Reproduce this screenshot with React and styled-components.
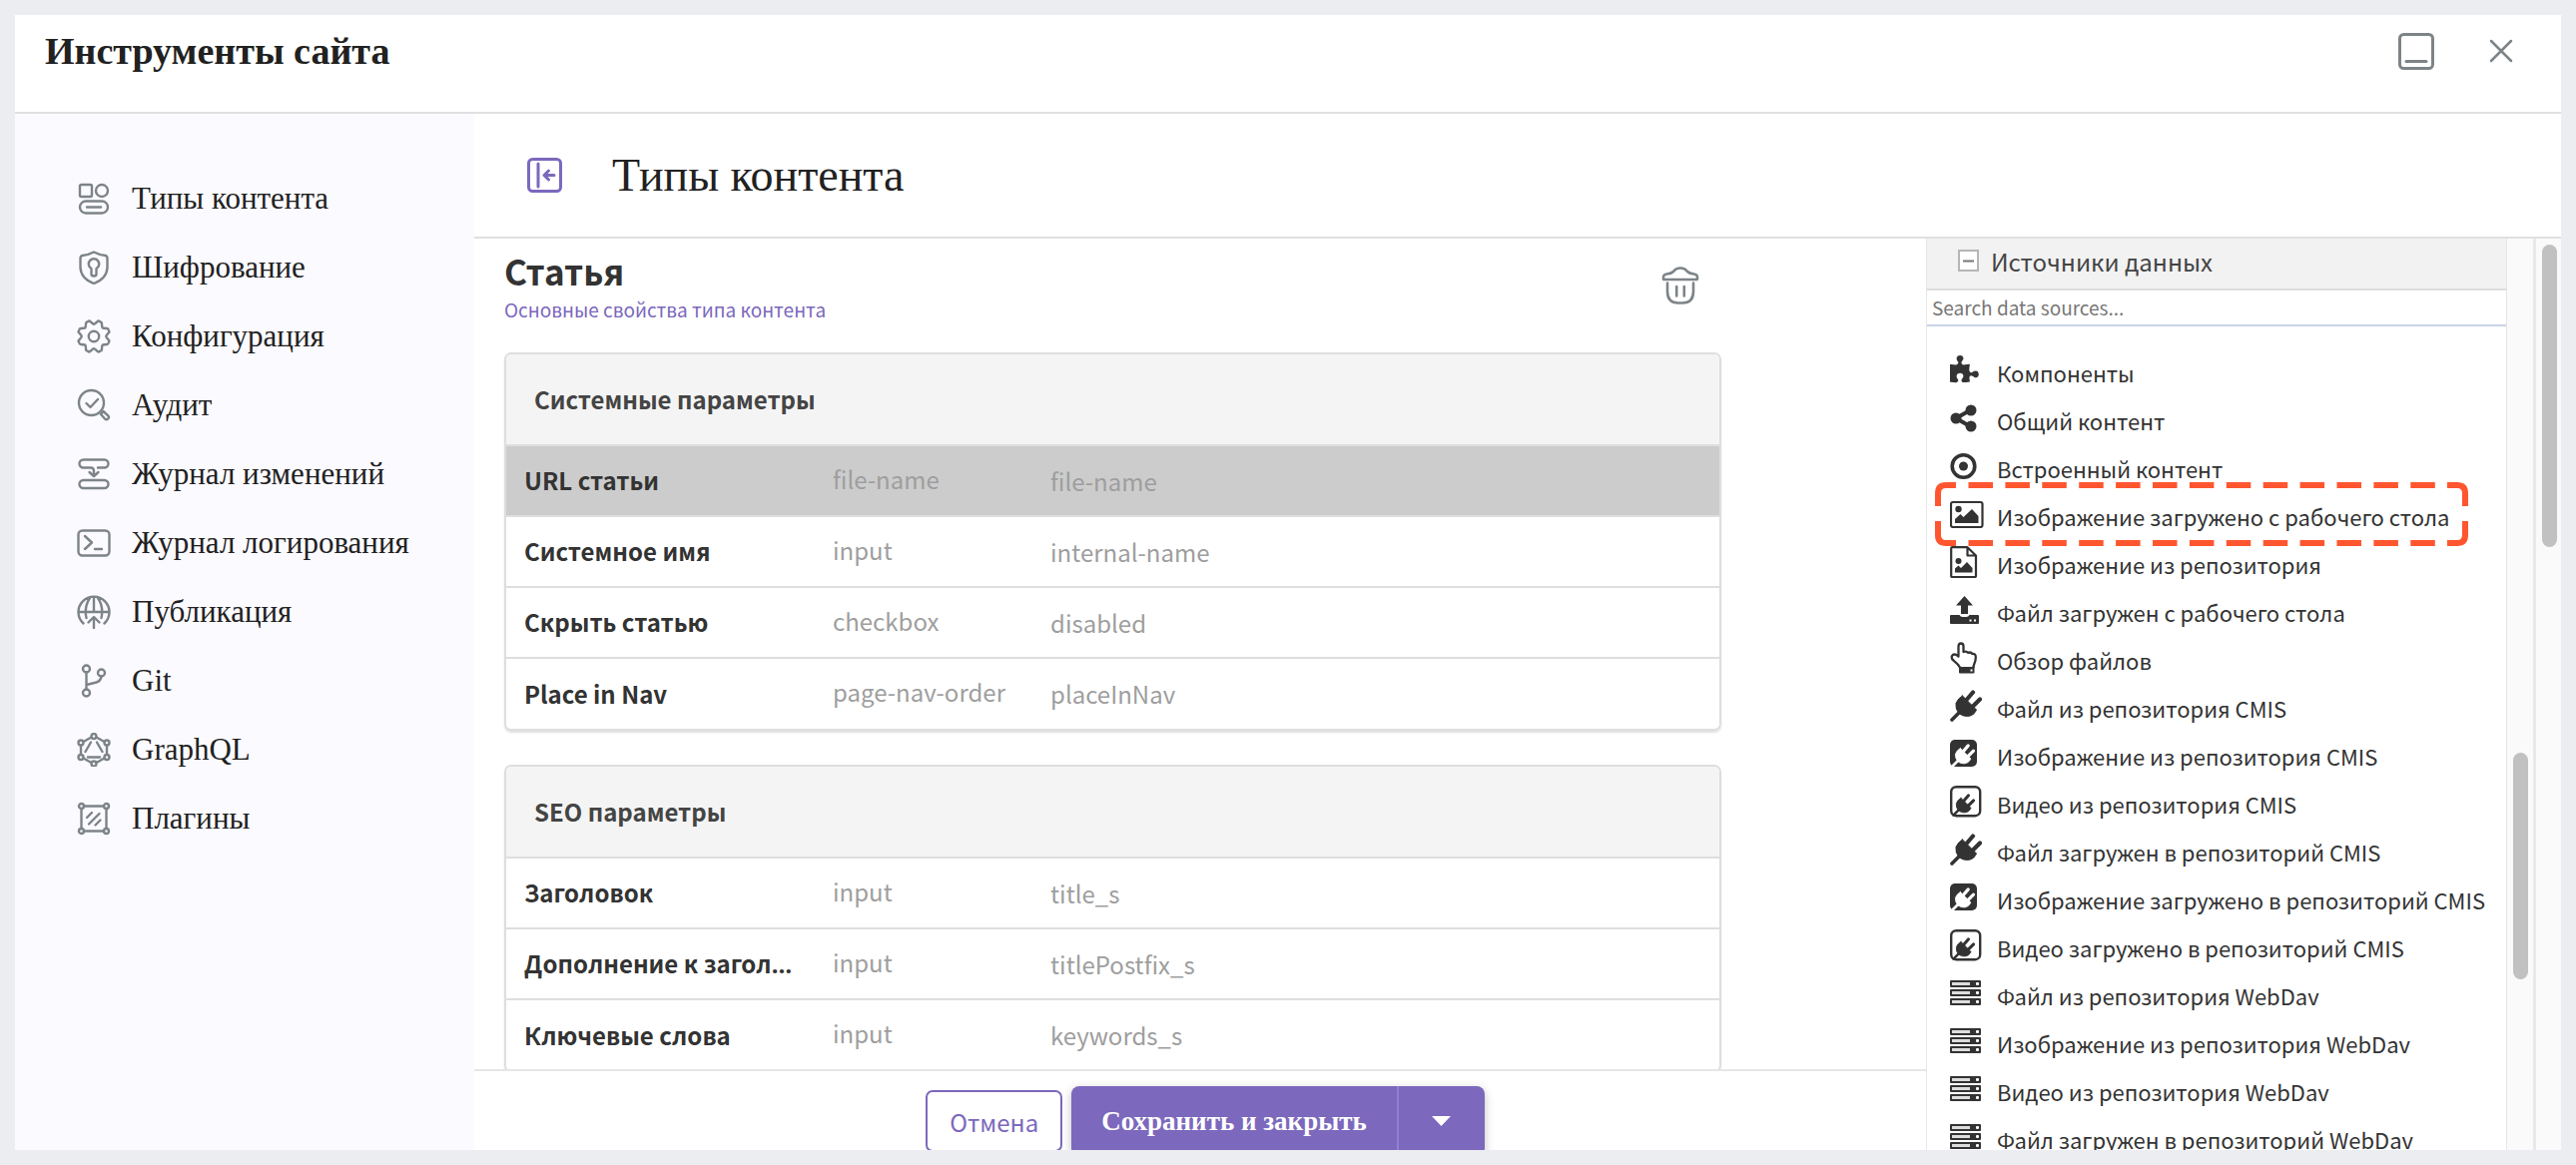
import React, { useState } from 'react';
import styled, { createGlobalStyle, css } from 'styled-components';

const sans = `'Noto Sans CJK SC', 'Noto Sans', sans-serif`;
const serif = `'Liberation Serif', 'Times New Roman', serif`;

const GlobalStyle = createGlobalStyle`
  * {
    box-sizing: border-box;
  }
  body {
    margin: 0;
    background: #ecedf1;
    color: #212121;
    font-family: ${sans};
  }
  h1, h2, h3, ul {
    margin: 0;
    padding: 0;
  }
  button {
    border: 0;
    padding: 0;
    background: none;
    font: inherit;
    color: inherit;
    cursor: pointer;
  }
`;

const S = {
  Page: styled.div`
    height: 100vh;
    padding: 15px;
  `,

  Dialog: styled.div`
    height: 100%;
    display: flex;
    flex-direction: column;
    background: #fff;
    overflow: hidden;
  `,

  TopBar: styled.header`
    flex: none;
    height: 99px;
    padding: 14px 48px 0 30px;
    display: flex;
    align-items: flex-start;
    justify-content: space-between;
    border-bottom: 2px solid #e0e0e0;
  `,

  TopTitle: styled.h1`
    font-family: ${serif};
    font-size: 38px;
    line-height: 44px;
    font-weight: bold;
  `,

  TopActions: styled.div`
    height: 44px;
    display: flex;
    align-items: center;
    gap: 54px;
    color: #7d8488;
  `,

  IconButton: styled.button`
    display: flex;
    align-items: center;
    justify-content: center;
    color: ${(props) => props.$color || 'inherit'};
  `,

  Body: styled.div`
    flex: 1;
    min-height: 0;
    display: flex;
  `,

  Sidebar: styled.nav`
    flex: none;
    width: 460px;
    padding: 50px 20px 0 62px;
    background: #fbfaff;
  `,

  NavLink: styled.a`
    height: 69px;
    display: flex;
    align-items: center;
    gap: 21px;
    font-family: ${serif};
    font-size: 31px;
    line-height: 34px;
    color: #212121;
    text-decoration: none;
    white-space: nowrap;

    > svg {
      color: #7d8488;
    }
  `,

  Main: styled.main`
    flex: 1;
    min-width: 0;
    display: flex;
    flex-direction: column;
  `,

  SectionBar: styled.div`
    flex: none;
    height: 125px;
    padding-left: 53px;
    display: flex;
    align-items: center;
    gap: 50px;
    border-bottom: 2px solid #e0e0e0;
  `,

  SectionTitle: styled.h2`
    font-family: ${serif};
    font-size: 46px;
    line-height: 50px;
    font-weight: normal;
  `,

  Workspace: styled.div`
    flex: 1;
    min-height: 0;
    display: flex;
  `,

  Editor: styled.div`
    flex: 1;
    min-width: 0;
    display: flex;
    flex-direction: column;
  `,

  Form: styled.div`
    flex: 1;
    min-height: 0;
    overflow: hidden;
    padding: 10px 205px 0 30px;
  `,

  FormHead: styled.div`
    display: flex;
    align-items: center;
    justify-content: space-between;
    margin-bottom: 26px;
    padding-right: 22px;

    > button {
      margin-bottom: 4px;
    }
  `,

  FormTitle: styled.h3`
    font-size: 35px;
    line-height: 44px;
    color: #333;
  `,

  FormLink: styled.a`
    display: block;
    font-size: 19px;
    line-height: 34px;
    color: #7c68bd;
    text-decoration: none;
  `,

  Card: styled.section`
    margin-bottom: 34px;
    border: 2px solid #dedede;
    border-radius: 7px;
    box-shadow: 0 2px 2px rgba(0, 0, 0, 0.12);
    overflow: hidden;
  `,

  CardTitle: styled.h3`
    height: 90px;
    padding-left: 28px;
    font-size: 24px;
    line-height: 90px;
    color: #444;
    background: #f4f4f4;
  `,

  FieldTable: styled.table`
    width: 100%;
    table-layout: fixed;
    border-collapse: collapse;
    font-size: 24px;
    line-height: 36px;
  `,

  FieldRow: styled.tr`
    height: 71px;
    border-top: 2px solid #dedede;
    background: ${(props) => (props.$selected ? '#ccc' : '#fff')};
  `,

  /* the cell's own font only draws the ellipsis, so it sits on the baseline */
  FieldName: styled.th`
    width: 327px;
    padding: 0 35px 0 18px;
    text-align: left;
    font-family: 'Noto Sans', sans-serif;
    font-weight: bold;
    color: #333;
    white-space: nowrap;
    overflow: hidden;
    text-overflow: ellipsis;

    > span {
      font-family: ${sans};
    }
  `,

  FieldType: styled.td`
    width: 218px;
    padding: 0 0 4px;
    color: #9e9e9e;
    white-space: nowrap;
  `,

  FieldId: styled.td`
    padding: 0;
    color: #9e9e9e;
  `,

  Footer: styled.footer`
    flex: none;
    height: 81px;
    padding: 15px 0 0 10px;
    display: flex;
    align-items: flex-start;
    justify-content: center;
    gap: 9px;
    border-top: 2px solid #e6e6e6;
    overflow: hidden;
  `,

  CancelButton: styled.button`
    height: 62px;
    margin-top: 4px;
    padding: 0 22px;
    border: 2px solid #7c68bd;
    border-radius: 7px;
    font-size: 24px;
    color: #7c68bd;
  `,

  SaveGroup: styled.div`
    height: 70px;
    display: flex;
    border-radius: 8px;
    background: #7c68bd;
    color: #fff;
    box-shadow: 0 3px 10px rgba(0, 0, 0, 0.25);
  `,

  SaveButton: styled.button`
    padding: 0 30px;
    font-family: ${serif};
    font-size: 27px;
    font-weight: bold;
    border-right: 2px solid #9181ca;
  `,

  SaveMenuButton: styled.button`
    width: 86px;
    display: flex;
    align-items: center;
    justify-content: center;
  `,

  Sources: styled.aside`
    flex: none;
    width: 582px;
    border: solid #e6e6e6;
    border-width: 0 1px;
    overflow: hidden;
  `,

  SourcesHead: styled.div`
    height: 52px;
    padding: 0 0 6px 31px;
    display: flex;
    align-items: center;
    gap: 12px;
    font-size: 24px;
    color: #444;
    background: #f2f2f2;
    border-bottom: 2px solid #ddd;
  `,

  Toggle: styled.button`
    width: 21px;
    height: 22px;
    display: flex;
    align-items: center;
    justify-content: center;
    border: 2px solid #b5b5b5;
    background: #fff;
    color: #777;
  `,

  Search: styled.input`
    display: block;
    width: 100%;
    height: 36px;
    padding: 0 5px 2px;
    border: 0;
    border-bottom: 2px solid #c9d3e6;
    border-radius: 0;
    outline: none;
    font-family: ${sans};
    font-size: 19px;

    &::placeholder {
      color: #777;
      opacity: 1;
    }
  `,

  SourceList: styled.ul`
    padding-top: 22px;
    list-style: none;
  `,

  Source: styled.li`
    position: relative;
    height: 48px;
    padding-left: 23px;
    display: flex;
    align-items: center;
    font-size: 22px;
    line-height: 48px;
    color: #333;
    white-space: nowrap;
  `,

  SourceIcon: styled.span`
    flex: none;
    width: 47px;
    height: 44px;
    display: flex;
    align-items: center;
    align-self: flex-start;
  `,

  Highlight: styled.svg`
    position: absolute;
    left: 8px;
    top: -10px;
  `,

  Track: styled.div`
    flex: none;
    width: ${(props) => props.$width};
    padding: ${(props) => props.$top} 0 0 6px;
    background: #fafafa;
    ${(props) =>
      props.$divider &&
      css`
        border-right: 3px solid #e8e8e8;
      `}
  `,

  Thumb: styled.div`
    width: 15px;
    height: ${(props) => props.$length};
    border-radius: 8px;
    background: #c1c1c1;
  `,
};

function LineIcon({ size = 34, width = 2.4, children }) {
  return (
    <svg
      width={size}
      height={size}
      viewBox={`0 0 ${size} ${size}`}
      fill="none"
      stroke="currentColor"
      strokeWidth={width}
      strokeLinecap="round"
      strokeLinejoin="round"
      aria-hidden="true"
    >
      {children}
    </svg>
  );
}

function gearPath() {
  const at = (r, deg) => {
    const a = (deg * Math.PI) / 180;
    return `${(17 + r * Math.sin(a)).toFixed(2)} ${(17 - r * Math.cos(a)).toFixed(2)}`;
  };
  let d = `M${at(12.2, 0)}`;
  for (let k = 0; k < 8; k++) {
    const tooth = k * 45 + 22.5;
    d += `Q${at(12.6, tooth - 17)} ${at(15.2, tooth - 9)}`;
    d += `Q${at(16.6, tooth - 7)} ${at(16, tooth)}`;
    d += `Q${at(16.6, tooth + 7)} ${at(15.2, tooth + 9)}`;
    d += `Q${at(12.6, tooth + 17)} ${at(12.2, tooth + 22.5)}`;
  }
  return d + 'Z';
}

const hexNodes = [
  [17, 3.5],
  [30, 10],
  [30, 24.5],
  [17, 31],
  [4, 24.5],
  [4, 10],
];

const navItems = [
  {
    label: 'Типы контента',
    icon: (
      <>
        <rect x="3" y="3" width="12" height="12" rx="1.5" />
        <circle cx="25" cy="9" r="6" />
        <rect x="3" y="19.5" width="28" height="12" rx="6" />
        <path d="M10 25.5h14" />
      </>
    ),
  },
  {
    label: 'Шифрование',
    icon: (
      <>
        <path d="M17 1.5Q11 4.500 5.500 5Q3.500 5.500 3.500 8v9Q4 28 17 33Q30 28 30.500 17V8q0-2.500-2-3Q23 4.500 17 1.500z" />
        <path d="M14.500 18a5.200 5.200 0 1 1 5 0v5.500q0 2-2.500 2t-2.500-2z" />
      </>
    ),
  },
  {
    label: 'Конфигурация',
    icon: (
      <>
        <path d={gearPath()} />
        <circle cx="17" cy="17" r="5.2" />
      </>
    ),
  },
  {
    label: 'Аудит',
    icon: (
      <>
        <circle cx="14.500" cy="14.500" r="12.500" />
        <path d="M9.500 15l4 4 7.500-8M24 26l4 4.500a2.200 2.200 0 0 0 3.200-3.200L26.500 23z" />
      </>
    ),
  },
  {
    label: 'Журнал изменений',
    icon: (
      <>
        <path d="M21 10.500h6.500a4 4 0 0 0 0-8h-21a4 4 0 0 0 0 8H14q3 0 3 3.500v4M12.500 15l4.500 4 4.500-4" />
        <rect x="2.500" y="23" width="29" height="8" rx="4" />
      </>
    ),
  },
  {
    label: 'Журнал логирования',
    icon: (
      <>
        <rect x="1.500" y="4.500" width="31" height="25" rx="4" />
        <path d="M8 10l7 6.500L8 23M18 23h7" />
      </>
    ),
  },
  {
    label: 'Публикация',
    icon: (
      <>
        <path d="M6.500 28.500a15.500 15.500 0 1 1 21 0M9.500 23Q7 12 13 3M24.500 23Q27 12 21 3M17 2v15M1.500 17h31M17 33V23M11.500 27.500l5.500-5.500 5.500 5.500" />
      </>
    ),
  },
  {
    label: 'Git',
    icon: (
      <>
        <circle cx="9.500" cy="5" r="3.500" />
        <circle cx="9.500" cy="29" r="3.500" />
        <circle cx="24.500" cy="9" r="3.500" />
        <path d="M9.500 8.500v17M24.500 12.500q-.5 4.500-5 6L9.500 21" />
      </>
    ),
  },
  {
    label: 'GraphQL',
    icon: (
      <>
        {hexNodes.map(([x, y]) => (
          <circle key={`${x}-${y}`} cx={x} cy={y} r="2.500" />
        ))}
        <path d="M19.500 4.500l8 4.500M30 12.500V22M27.500 25.500l-8 4.500M14.500 30l-8-4.500M4 22V12.500M6.500 9l8-4.500" />
        <path d="M14 9.500L8.500 19M20 9.500l5.500 9.500M11 24.500h12" />
      </>
    ),
  },
  {
    label: 'Плагины',
    icon: (
      <>
        <circle cx="4.500" cy="4.500" r="2.500" />
        <circle cx="29.500" cy="4.500" r="2.500" />
        <circle cx="4.500" cy="29.500" r="2.500" />
        <circle cx="29.500" cy="29.500" r="2.500" />
        <path d="M7 4.500h20M7 29.500h20M4.500 7v20M29.500 7v20" />
        <path d="M10 16l5-5M12 22.500L22.500 12M18.500 23.500l5-5" />
      </>
    ),
  },
];

const cards = [
  {
    title: 'Системные параметры',
    fields: [
      { name: 'URL статьи', type: 'file-name', id: 'file-name', selected: true },
      { name: 'Системное имя', type: 'input', id: 'internal-name' },
      { name: 'Скрыть статью', type: 'checkbox', id: 'disabled' },
      { name: 'Place in Nav', type: 'page-nav-order', id: 'placeInNav' },
    ],
  },
  {
    title: 'SEO параметры',
    fields: [
      { name: 'Заголовок', type: 'input', id: 'title_s' },
      { name: 'Дополнение к заголовку', type: 'input', id: 'titlePostfix_s' },
      { name: 'Ключевые слова', type: 'input', id: 'keywords_s' },
    ],
  },
];

function PuzzleIcon() {
  return (
    <svg width="31" height="31" viewBox="64 0 1792 1792" fill="currentColor">
      <path d="M1728 1098q0 81-44.500 135t-123.500 54q-41 0-77.500-17.500t-59-38-56.500-38-71-17.500q-110 0-110 124 0 39 16 115t15 115v5q-22 0-33 1-34 3-97.500 11.500t-115.500 13.500-98 5q-61 0-103-26.500t-42-83.500q0-37 17.500-71t38-56.500 38-59 17.500-77.500q0-79-54-123.500t-135-44.500q-84 0-143 45.500t-59 127.500q0 43 15 83t33.500 64.500 33.500 53 15 50.500q0 45-46 89-37 35-117 35-95 0-245-24-9-2-27.500-4t-27.500-4l-13-2q-1 0-3-1-2 0-2-1v-1024q2 1 17.500 3.500t34 5 21.500 3.500q150 24 245 24 80 0 117-35 46-44 46-89 0-22-15-50.500t-33.500-53-33.500-64.500-15-83q0-82 59-127.500t144-45.500q80 0 134 44.500t54 123.500q0 41-17.500 77.500t-38 59-38 56.500-17.500 71q0 57 42 83.500t103 26.500q64 0 180-15t163-17v2q-1 2-3.500 17.500t-5 34-3.500 21.500q-24 150-24 245 0 80 35 117 44 46 89 46 22 0 50.500-15t53-33.500 64.500-33.500 83-15q82 0 127.500 59t45.500 143z" />
    </svg>
  );
}

function ShareIcon() {
  return (
    <svg width="27" height="28" viewBox="0 0 27 28">
      <path d="M21 5.500L6 14l15 8.500" fill="none" stroke="currentColor" strokeWidth="4" />
      <circle cx="6" cy="14" r="5.500" fill="currentColor" />
      <circle cx="21" cy="6" r="5.500" fill="currentColor" />
      <circle cx="21" cy="22" r="5.500" fill="currentColor" />
    </svg>
  );
}

function TargetIcon() {
  return (
    <svg width="27" height="28" viewBox="0 0 27 28">
      <circle cx="13.500" cy="14" r="11.300" fill="none" stroke="currentColor" strokeWidth="3.600" />
      <circle cx="13.500" cy="14" r="4.500" fill="currentColor" />
    </svg>
  );
}

function ImageIcon() {
  return (
    <svg width="34" height="28" viewBox="0 0 34 28">
      <rect x="1" y="2" width="31.500" height="25" rx="2" fill="none" stroke="currentColor" strokeWidth="2.200" />
      <circle cx="8.500" cy="9" r="3.200" fill="currentColor" />
      <path d="M5 23v-4l5.500-5 3 3L22 9l6.500 7v7z" fill="currentColor" />
    </svg>
  );
}

function FileImageIcon() {
  return (
    <svg width="28" height="32" viewBox="0 0 28 32">
      <path
        d="M1.200 2.200q0-1 1-1H17.500L26 9.500V30q0 1-1 1H2.200q-1 0-1-1zM17.500 1.500V9.500H26"
        fill="none"
        stroke="currentColor"
        strokeWidth="2.200"
        strokeLinejoin="round"
      />
      <circle cx="8.500" cy="15" r="3" fill="currentColor" />
      <path d="M5 26.500v-4l3.500-3 2.500 2.500 6-6 5.500 6v4.500z" fill="currentColor" />
    </svg>
  );
}

function UploadIcon() {
  return (
    <svg width="29" height="28" viewBox="0 0 29 28" fill="currentColor">
      <path d="M14.500 0l8.500 9.500h-5V18h-7V9.500H6z" />
      <path
        fillRule="evenodd"
        d="M1 19h8.500q1 2 3 2h4q2 0 3-2H28q1 0 1 1v7q0 1-1 1H1q-1 0-1-1v-7q0-1 1-1zM19.500 23.500v2h2v-2zM24 23.500v2h2v-2z"
      />
    </svg>
  );
}

function HandIcon() {
  return (
    <svg width="28" height="32" viewBox="0 0 28 32">
      <path
        d="M10 25.500C8 22 6 20.500 3.500 18.500Q1 16.500 2 14q1.500-2.500 4.500-1l2 1.500V4.500q0-3 2.500-3t2.500 3V10q3-1 4.500.8 3-1 4.300 1 3.500-.3 3.500 3.700 0 3.500-1.500 6.500-.8 2-.8 4"
        fill="none"
        stroke="currentColor"
        strokeWidth="2.300"
        strokeLinejoin="round"
      />
      <path
        fillRule="evenodd"
        d="M9 25h15.500v5.500q0 1-1 1H10q-1 0-1-1zM20.500 27.500v2h2v-2z"
        fill="currentColor"
      />
    </svg>
  );
}

function PlugShape() {
  return (
    <g stroke="currentColor" strokeLinecap="round">
      <path d="M2 30l9-9" strokeWidth="3.600" />
      <path d="M17 9.500l6-7M23 16.500l7-7" strokeWidth="4.200" />
      <path
        d="M12.500 6L26.500 20q-2.500 6-9 6.500-4.500 0-8-2.500Q5 19.500 6 13.500 8 8.500 12.500 6z"
        fill="currentColor"
        strokeWidth="1"
      />
    </g>
  );
}

function PlugIcon() {
  return (
    <svg width="32" height="32" viewBox="0 0 32 32">
      <PlugShape />
    </svg>
  );
}

function PlugSolidIcon() {
  return (
    <svg width="28" height="28" viewBox="0 0 28 28">
      <rect x="0" y="0" width="27" height="27" rx="5" fill="currentColor" />
      <g transform="translate(1 4) scale(0.750)" color="#fff">
        <PlugShape />
      </g>
    </svg>
  );
}

function PlugOutlineIcon() {
  return (
    <svg width="32" height="32" viewBox="0 0 32 32">
      <rect x="1.200" y="1.200" width="29" height="29" rx="5" fill="none" stroke="currentColor" strokeWidth="2.400" />
      <g transform="translate(2 8) scale(0.720)">
        <PlugShape />
      </g>
    </svg>
  );
}

function ServerIcon() {
  return (
    <svg width="32" height="26" viewBox="0 0 32 26">
      {[0, 9, 18].map((y) => (
        <g key={y}>
          <rect x="0" y={y} width="31" height="7" rx="1" fill="currentColor" />
          <rect x="2" y={y + 2} width="18" height="3" fill="#ddd" />
          <rect x="26" y={y + 2} width="3" height="3" rx="1" fill="#fff" />
        </g>
      ))}
    </svg>
  );
}

const sources = [
  { label: 'Компоненты', Icon: PuzzleIcon },
  { label: 'Общий контент', Icon: ShareIcon },
  { label: 'Встроенный контент', Icon: TargetIcon },
  { label: 'Изображение загружено с рабочего стола', Icon: ImageIcon, marked: true },
  { label: 'Изображение из репозитория', Icon: FileImageIcon },
  { label: 'Файл загружен с рабочего стола', Icon: UploadIcon },
  { label: 'Обзор файлов', Icon: HandIcon },
  { label: 'Файл из репозитория CMIS', Icon: PlugIcon },
  { label: 'Изображение из репозитория CMIS', Icon: PlugSolidIcon },
  { label: 'Видео из репозитория CMIS', Icon: PlugOutlineIcon },
  { label: 'Файл загружен в репозиторий CMIS', Icon: PlugIcon },
  { label: 'Изображение загружено в репозиторий CMIS', Icon: PlugSolidIcon },
  { label: 'Видео загружено в репозиторий CMIS', Icon: PlugOutlineIcon },
  { label: 'Файл из репозитория WebDav', Icon: ServerIcon },
  { label: 'Изображение из репозитория WebDav', Icon: ServerIcon },
  { label: 'Видео из репозитория WebDav', Icon: ServerIcon },
  { label: 'Файл загружен в репозиторий WebDav', Icon: ServerIcon },
];

function MarkedFrame() {
  return (
    <S.Highlight width="534" height="64" viewBox="0 0 534 64" fill="none" stroke="#ff5630" strokeWidth="6">
      <path d="M33.500 3H501M33.500 61H501" strokeDasharray="24.500 12.400" />
      <path d="M3 24V11q0-8 8-8h10M513 3h10q8 0 8 8v13M531 39v14q0 8-8 8h-10M21 61H11q-8 0-8-8V39" />
    </S.Highlight>
  );
}

function FieldCard({ title, fields }) {
  return (
    <S.Card>
      <S.CardTitle>{title}</S.CardTitle>
      <S.FieldTable>
        <tbody>
          {fields.map((field) => (
            <S.FieldRow key={field.name} $selected={field.selected}>
              <S.FieldName scope="row">
                <span>{field.name}</span>
              </S.FieldName>
              <S.FieldType>{field.type}</S.FieldType>
              <S.FieldId>{field.id}</S.FieldId>
            </S.FieldRow>
          ))}
        </tbody>
      </S.FieldTable>
    </S.Card>
  );
}

function SourcesPanel() {
  const [open, setOpen] = useState(true);
  const [query, setQuery] = useState('');
  const found = sources.filter((s) =>
    s.label.toLowerCase().includes(query.toLowerCase())
  );

  return (
    <S.Sources>
      <S.SourcesHead>
        <S.Toggle aria-label="Свернуть" onClick={() => setOpen(!open)}>
          <svg width="11" height="11" viewBox="0 0 11 11">
            <path d={open ? 'M0 5.500h11' : 'M0 5.500h11M5.500 0v11'} stroke="currentColor" strokeWidth="2" />
          </svg>
        </S.Toggle>
        <span>Источники данных</span>
      </S.SourcesHead>
      <S.Search
        type="text"
        aria-label="Search data sources"
        placeholder="Search data sources..."
        value={query}
        onChange={(e) => setQuery(e.target.value)}
      />
      {open && (
        <S.SourceList>
          {found.map(({ label, Icon, marked }) => (
            <S.Source key={label}>
              <S.SourceIcon>
                <Icon />
              </S.SourceIcon>
              {label}
              {marked && <MarkedFrame />}
            </S.Source>
          ))}
        </S.SourceList>
      )}
    </S.Sources>
  );
}

function App() {
  return (
    <>
      <GlobalStyle />
      <S.Page>
        <S.Dialog>
          <S.TopBar>
            <S.TopTitle>Инструменты сайта</S.TopTitle>
            <S.TopActions>
              <S.IconButton aria-label="Свернуть окно">
                <LineIcon size={38} width={3}>
                  <rect x="2.500" y="2.500" width="33" height="34" rx="4" />
                  <path d="M9 29.500h20" />
                </LineIcon>
              </S.IconButton>
              <S.IconButton aria-label="Закрыть">
                <LineIcon size={24} width={2.5}>
                  <path d="M2 2l20 20M22 2L2 22" />
                </LineIcon>
              </S.IconButton>
            </S.TopActions>
          </S.TopBar>

          <S.Body>
            <S.Sidebar>
              {navItems.map(({ label, icon }) => (
                <S.NavLink key={label} href="#">
                  <LineIcon>{icon}</LineIcon>
                  {label}
                </S.NavLink>
              ))}
            </S.Sidebar>

            <S.Main>
              <S.SectionBar>
                <S.IconButton aria-label="Скрыть меню" $color="#7c68bd">
                  <LineIcon size={35} width={3}>
                    <rect x="1.500" y="1.500" width="32" height="32" rx="4" />
                    <path d="M11 6v23M27 17.500H17M21.500 13L17 17.500l4.500 4.500" />
                  </LineIcon>
                </S.IconButton>
                <S.SectionTitle>Типы контента</S.SectionTitle>
              </S.SectionBar>

              <S.Workspace>
                <S.Editor>
                  <S.Form>
                    <S.FormHead>
                      <div>
                        <S.FormTitle>Статья</S.FormTitle>
                        <S.FormLink href="#">
                          Основные свойства типа контента
                        </S.FormLink>
                      </div>
                      <S.IconButton aria-label="Удалить" $color="#7d8488">
                        <LineIcon size={38} width={2.6}>
                          <path d="M2 12.500v-2Q2 8 5.500 7.500 10 7 12 5q2.500-3.500 7-3.500T26 5q2 2 6.500 2.500Q36 8 36 10.500v2q0 .5-.5.5h-33q-.5 0-.5-.5zM6 16.500V25q0 11.500 11 11.500h4Q32 36.500 32 25v-8.500M15.200 20v9.500M22.800 20v9.500" />
                        </LineIcon>
                      </S.IconButton>
                    </S.FormHead>
                    {cards.map((card) => (
                      <FieldCard key={card.title} {...card} />
                    ))}
                  </S.Form>

                  <S.Footer>
                    <S.CancelButton>Отмена</S.CancelButton>
                    <S.SaveGroup>
                      <S.SaveButton>Сохранить и закрыть</S.SaveButton>
                      <S.SaveMenuButton aria-label="Другие действия">
                        <svg width="19" height="10" viewBox="0 0 19 10">
                          <path d="M0 0h19L9.500 10z" fill="currentColor" />
                        </svg>
                      </S.SaveMenuButton>
                    </S.SaveGroup>
                  </S.Footer>
                </S.Editor>

                <SourcesPanel />
                <S.Track $width="29px" $top="515px" $divider>
                  <S.Thumb $length="227px" />
                </S.Track>
                <S.Track $width="25px" $top="6px">
                  <S.Thumb $length="303px" />
                </S.Track>
              </S.Workspace>
            </S.Main>
          </S.Body>
        </S.Dialog>
      </S.Page>
    </>
  );
}

export default App;
